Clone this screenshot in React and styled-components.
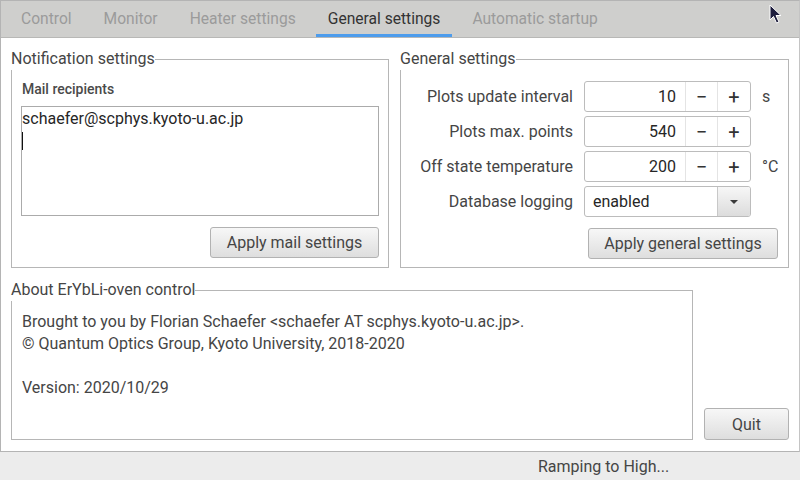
import styled, { createGlobalStyle } from "styled-components";

const GlobalStyle = createGlobalStyle`
  html, body {
    margin: 0;
    padding: 0;
    background: #ececec;
  }
  body {
    font-family: Roboto, "Noto Sans", "Liberation Sans", sans-serif;
    color: #454545;
  }
  * { box-sizing: border-box; }
`;

const Window = styled.div`
  position: relative;
  width: 800px;
  height: 480px;
  display: flex;
  flex-direction: column;
  background: #ececec;
  overflow: hidden;
`;

const TabWidget = styled.div`
  display: flex;
  flex-direction: column;
  height: 452px;
  border: 1px solid #b4b4b4;
  border-right-color: #c4c4c4;
`;

const TabBar = styled.div`
  display: flex;
  height: 37px;
  padding-left: 8px;
  background: #cfcfcd;
  border-bottom: 1px solid #b8b8b6;
`;

const Tab = styled.div`
  display: flex;
  align-items: center;
  padding: 0 12px;
  margin-right: 8px;
  font-size: 15.6px;
  color: ${({ active }) => (active ? "#333" : "#9b9b9b")};
  box-shadow: ${({ active }) => (active ? "inset 0 -3px 0 #4d9cec" : "none")};
`;

const Panel = styled.div`
  flex: 1;
  background: #fff;
  padding: 10px 9px 11px 10px;
  display: grid;
  grid-template-columns: 378px 389px;
  grid-template-rows: 220px 1fr;
  column-gap: 11px;
  row-gap: 0;
`;

const Group = styled.fieldset`
  margin: 0;
  padding: 0;
  border: 1px solid #b6b6b6;
  min-width: 0;
  display: flex;
  flex-direction: column;
`;

const Legend = styled.legend`
  padding: 0;
  margin-left: -1px;
  font-size: 16px;
  line-height: 22px;
  color: #454545;
  background: #fff;
`;

const NotifyBody = styled.div`
  display: flex;
  flex-direction: column;
  padding: 8px 9px 9px 9px;
`;

const SmallLabel = styled.div`
  font-size: 14px;
  font-weight: 500;
  color: #4a4a4a;
  height: 22px;
  line-height: 22px;
  padding-left: 1px;
`;

const MailBox = styled.div`
  margin-top: 6px;
  height: 110px;
  border: 1px solid #ababab;
  padding: 1px 0 0 0;
  font-size: 16px;
  line-height: 21px;
  color: #262626;
`;

const Caret = styled.span`
  display: inline-block;
  width: 1px;
  height: 18px;
  margin-top: 3px;
  background: #111;
  vertical-align: top;
`;

const ButtonRow = styled.div`
  display: flex;
  justify-content: flex-end;
  margin-top: ${({ top }) => top || 11}px;
  padding-right: ${({ inset }) => inset || 0}px;
`;

const Button = styled.button`
  height: ${({ h }) => h || 31}px;
  width: ${({ w }) => w}px;
  border: 1px solid #b2b2b2;
  border-radius: 3px;
  background: linear-gradient(#f7f7f7, #dedede);
  font-family: inherit;
  font-size: 16px;
  color: #454545;
  padding: 0;
`;

const SettingsGrid = styled.div`
  display: grid;
  grid-template-columns: 1fr 167px 26px;
  grid-auto-rows: 31px;
  column-gap: 11px;
  row-gap: 4px;
  align-items: center;
  padding-top: 11px;
`;

const RowLabel = styled.div`
  text-align: right;
  font-size: 16px;
  color: #454545;
`;

const Unit = styled.div`
  font-size: 16px;
  color: #454545;
`;

const SpinBox = styled.div`
  display: flex;
  height: 31px;
  border: 1px solid #bcbcbc;
  border-radius: 3px;
  background: #fff;
  overflow: hidden;
`;

const SpinValue = styled.div`
  flex: 1;
  display: flex;
  align-items: center;
  justify-content: flex-end;
  padding-right: 9px;
  font-size: 16px;
  color: #262626;
`;

const SpinStep = styled.div`
  width: ${({ w }) => w}px;
  display: flex;
  align-items: center;
  justify-content: center;
  border-left: 1px solid #e4e4e4;
  font-size: 20px;
  font-weight: 400;
  color: #333;
`;

const Combo = styled.div`
  display: flex;
  height: 31px;
  border: 1px solid #bcbcbc;
  border-radius: 3px;
  overflow: hidden;
  background: #fff;
`;

const ComboText = styled.div`
  flex: 1;
  display: flex;
  align-items: center;
  padding-left: 8px;
  font-size: 16px;
  color: #262626;
`;

const ComboArrow = styled.div`
  width: 33px;
  display: flex;
  align-items: center;
  justify-content: center;
  border-left: 1px solid #c8c8c8;
  background: linear-gradient(#f7f7f7, #dcdcdc);
  &::after {
    content: "";
    border-left: 4px solid transparent;
    border-right: 4px solid transparent;
    border-top: 4px solid #3a3a3a;
  }
`;

const AboutText = styled.div`
  padding: 10px 10px 8px;
  font-size: 16px;
  line-height: 22px;
  color: #454545;
`;

const BottomRow = styled.div`
  grid-column: 1 / span 2;
  display: flex;
  align-items: flex-end;
  gap: 11px;
  margin-top: 9px;
`;

const AboutGroup = styled(Group)`
  width: 682px;
  height: 161px;
`;

const StatusBar = styled.div`
  flex: 1;
  display: flex;
  align-items: center;
  padding-left: 538px;
  font-size: 16px;
  color: #454545;
`;

const Pointer = styled.svg`
  position: absolute;
  left: 769px;
  top: 4px;
`;

const settings = [
  { label: "Plots update interval", value: "10", unit: "s" },
  { label: "Plots max. points", value: "540", unit: "" },
  { label: "Off state temperature", value: "200", unit: "°C" },
];

export default function App() {
  const tabs = ["Control", "Monitor", "Heater settings", "General settings", "Automatic startup"];
  return (
    <>
      <GlobalStyle />
      <Window>
        <TabWidget>
          <TabBar>
            {tabs.map((t) => (
              <Tab key={t} active={t === "General settings"}>{t}</Tab>
            ))}
          </TabBar>
          <Panel>
            <Group>
              <Legend>Notification settings</Legend>
              <NotifyBody>
                <SmallLabel>Mail recipients</SmallLabel>
                <MailBox>
                  <div>schaefer@scphys.kyoto-u.ac.jp</div>
                  <div><Caret /></div>
                </MailBox>
                <ButtonRow>
                  <Button w={169}>Apply mail settings</Button>
                </ButtonRow>
              </NotifyBody>
            </Group>

            <Group>
              <Legend>General settings</Legend>
              <SettingsGrid>
                {settings.map((s) => (
                  <>
                    <RowLabel key={s.label}>{s.label}</RowLabel>
                    <SpinBox>
                      <SpinValue>{s.value}</SpinValue>
                      <SpinStep w={32}>−</SpinStep>
                      <SpinStep w={33}>+</SpinStep>
                    </SpinBox>
                    <Unit>{s.unit}</Unit>
                  </>
                ))}
                <RowLabel>Database logging</RowLabel>
                <Combo>
                  <ComboText>enabled</ComboText>
                  <ComboArrow />
                </Combo>
                <Unit />
              </SettingsGrid>
              <ButtonRow inset={10} top={11}>
                <Button w={190}>Apply general settings</Button>
              </ButtonRow>
            </Group>

            <BottomRow>
              <AboutGroup>
                <Legend>About ErYbLi-oven control</Legend>
                <AboutText>
                  Brought to you by Florian Schaefer &lt;schaefer AT scphys.kyoto-u.ac.jp&gt;.
                  <br />© Quantum Optics Group, Kyoto University, 2018-2020
                  <br />
                  <br />Version: 2020/10/29
                </AboutText>
              </AboutGroup>
              <Button w={85} h={32}>Quit</Button>
            </BottomRow>
          </Panel>
        </TabWidget>
        <StatusBar>Ramping to High...</StatusBar>
        <Pointer width="14" height="20" viewBox="0 0 14 20">
          <path d="M1 1 L1 16 L4.5 12.5 L7.5 19 L10 18 L7 11.5 L12 11.5 Z" fill="#1c1c3c" stroke="#fff" strokeWidth="1" strokeLinejoin="round" />
        </Pointer>
      </Window>
    </>
  );
}
